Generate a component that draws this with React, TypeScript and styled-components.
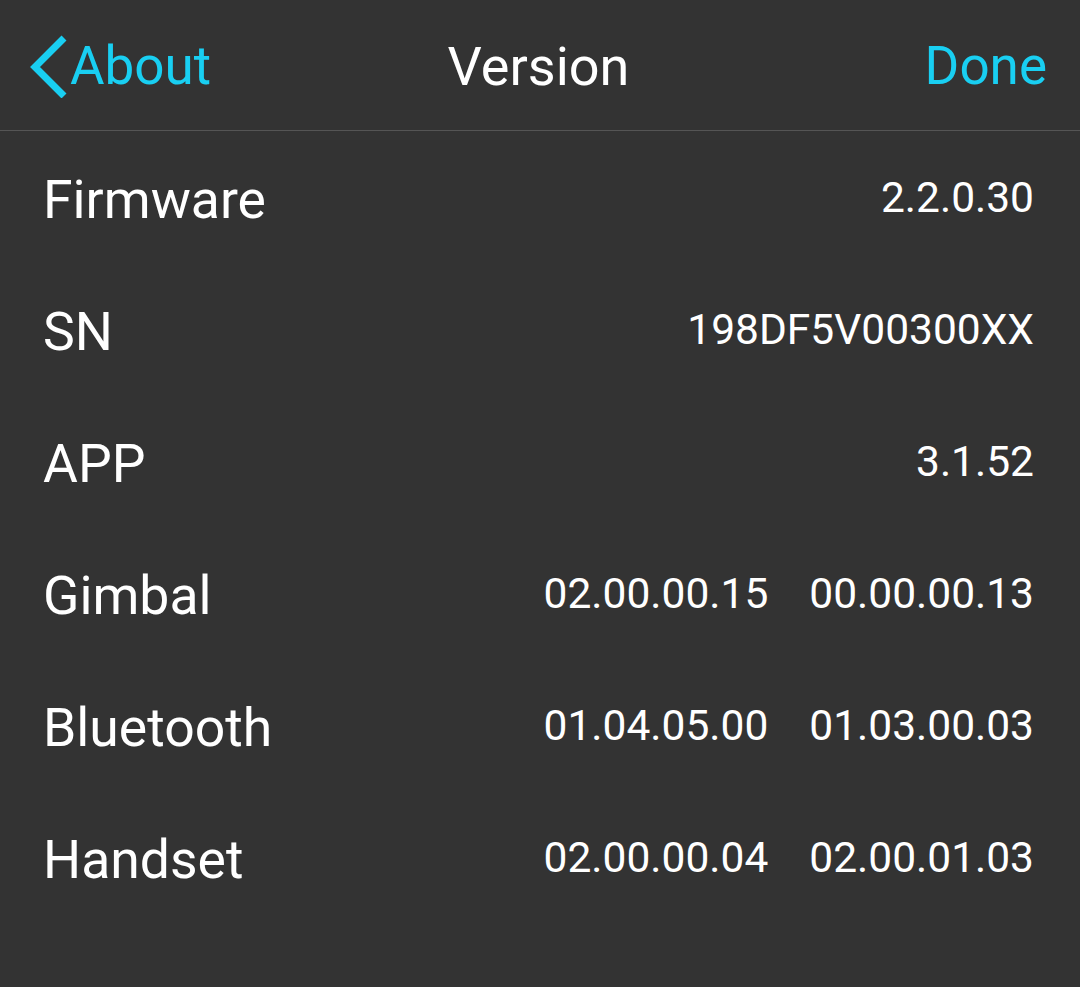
import React from "react";
import styled, { createGlobalStyle } from "styled-components";

const GlobalStyle = createGlobalStyle`
  html, body {
    margin: 0;
    padding: 0;
    background: #333333;
  }
  body {
    font-family: Roboto, "Noto Sans", "Liberation Sans", sans-serif;
  }
`;

const Screen = styled.div`
  width: 1080px;
  height: 987px;
  background: #333333;
  display: flex;
  flex-direction: column;
  overflow: hidden;
`;

const NavBar = styled.div`
  height: 130px;
  display: grid;
  grid-template-columns: 1fr auto 1fr;
  align-items: center;
  padding: 0 33px 0 30px;
  border-bottom: 1px solid #555555;
`;

const NavButton = styled.button<{ $align: "left" | "right" }>`
  justify-self: ${(p) => (p.$align === "left" ? "start" : "end")};
  display: flex;
  align-items: center;
  background: none;
  border: none;
  padding: 0;
  margin-top: 2px;
  font-family: inherit;
  font-size: 53px;
  color: #19cff2;
  cursor: pointer;
`;

const Title = styled.div`
  font-size: 54px;
  color: #ffffff;
  margin-top: 2px;
`;

const List = styled.div`
  display: flex;
  flex-direction: column;
`;

const Row = styled.div`
  height: 132px;
  display: flex;
  align-items: center;
  justify-content: space-between;
  padding: 0 46px 0 43px;
`;

const Label = styled.div`
  font-size: 53.5px;
  color: #ffffff;
  margin-top: 4px;
`;

const Values = styled.div`
  display: flex;
  gap: 41px;
`;

const Value = styled.span`
  font-size: 42.5px;
  color: #ffffff;
`;

const BackChevron = () => (
  <svg width="40" height="64" viewBox="0 0 40 64" style={{ marginRight: 0 }}>
    <polyline
      points="34,4 5,33 34,62"
      fill="none"
      stroke="#19cff2"
      strokeWidth="7"
    />
  </svg>
);

const rows: { label: string; values: string[] }[] = [
  { label: "Firmware", values: ["2.2.0.30"] },
  { label: "SN", values: ["198DF5V00300XX"] },
  { label: "APP", values: ["3.1.52"] },
  { label: "Gimbal", values: ["02.00.00.15", "00.00.00.13"] },
  { label: "Bluetooth", values: ["01.04.05.00", "01.03.00.03"] },
  { label: "Handset", values: ["02.00.00.04", "02.00.01.03"] },
];

const App: React.FC = () => {
  return (
    <>
      <GlobalStyle />
      <Screen>
        <NavBar>
          <NavButton $align="left">
            <BackChevron />
            About
          </NavButton>
          <Title>Version</Title>
          <NavButton $align="right">Done</NavButton>
        </NavBar>
        <List>
          {rows.map((r) => (
            <Row key={r.label}>
              <Label>{r.label}</Label>
              <Values>
                {r.values.map((v) => (
                  <Value key={v}>{v}</Value>
                ))}
              </Values>
            </Row>
          ))}
        </List>
      </Screen>
    </>
  );
};

export default App;
